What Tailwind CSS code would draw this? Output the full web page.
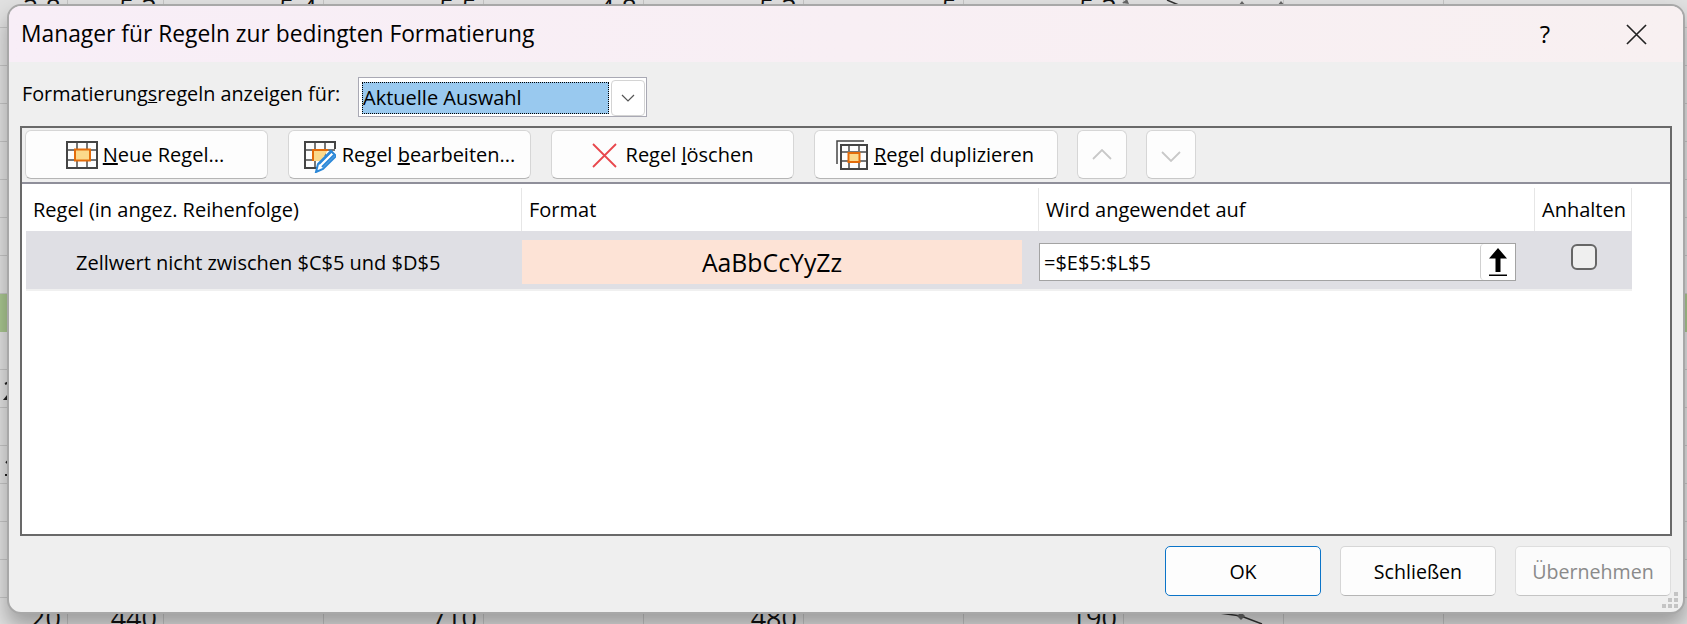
<!DOCTYPE html>
<html lang="de">
<head>
    <meta charset="UTF-8">
    <title>Manager für Regeln zur bedingten Formatierung</title>
    <script src="https://cdn.jsdelivr.net/npm/@tailwindcss/browser@4"></script>
</head>
<body class="m-0 overflow-hidden bg-[#e0e0e0] font-['Open_Sans',sans-serif] text-black">
<div class="relative w-[1687px] h-[624px] overflow-hidden">

    <!-- Tabelle im Hintergrund -->
    <div class="-mt-[10px] text-[27px] leading-none text-[#111]">
        <div class="flex h-[38px] border-b border-[#c4c4c4]">
            <div class="w-[68px] border-r border-[#c4c4c4] flex items-end justify-end pr-[6px] pb-[5px]">2.8</div>
            <div class="w-[96px] border-r border-[#c4c4c4] flex items-end justify-end pr-[6px] pb-[5px]">5.3</div>
            <div class="w-[160px] border-r border-[#c4c4c4] flex items-end justify-end pr-[6px] pb-[5px]">5.4</div>
            <div class="w-[160px] border-r border-[#c4c4c4] flex items-end justify-end pr-[6px] pb-[5px]">5.5</div>
            <div class="w-[160px] border-r border-[#c4c4c4] flex items-end justify-end pr-[6px] pb-[5px]">4.8</div>
            <div class="w-[160px] border-r border-[#c4c4c4] flex items-end justify-end pr-[6px] pb-[5px]">5.3</div>
            <div class="w-[160px] border-r border-[#c4c4c4] flex items-end justify-end pr-[6px] pb-[5px]">5</div>
            <div class="w-[160px] border-r border-[#c4c4c4] flex items-end justify-end pr-[6px] pb-[5px]">5.3</div>
            <div class="w-[160px] border-r border-[#c4c4c4]"></div>
            <div class="w-[160px] border-r border-[#c4c4c4]"></div>
        </div>
        <div class="h-[38px] border-b border-[#c4c4c4]"></div>
        <div class="h-[38px] border-b border-[#c4c4c4]"></div>
        <div class="h-[38px] border-b border-[#c4c4c4]"></div>
        <div class="h-[38px] border-b border-[#c4c4c4]"></div>
        <div class="h-[38px] border-b border-[#c4c4c4]"></div>
        <div class="h-[38px] border-b border-[#c4c4c4]"></div>
        <div class="h-[38px] border-b border-[#c4c4c4]"></div>
        <div class="h-[38px] bg-[#a8c58f]"></div>
        <div class="h-[38px] border-b border-[#c4c4c4]"></div>
        <div class="h-[38px] border-b border-[#c4c4c4]"></div>
        <div class="h-[38px] border-b border-[#c4c4c4]"></div>
        <div class="h-[38px] border-b border-[#c4c4c4]"></div>
        <div class="h-[38px] border-b border-[#c4c4c4]"></div>
        <div class="h-[38px] border-b border-[#c4c4c4]"></div>
        <div class="h-[38px] border-b border-[#c4c4c4]"></div>
        <div class="flex h-[38px]">
            <div class="w-[68px] border-r border-[#c4c4c4] flex items-end justify-end pr-[6px] pb-[5px]">20</div>
            <div class="w-[96px] border-r border-[#c4c4c4] flex items-end justify-end pr-[6px] pb-[5px]">440</div>
            <div class="w-[160px] border-r border-[#c4c4c4]"></div>
            <div class="w-[160px] border-r border-[#c4c4c4] flex items-end justify-end pr-[6px] pb-[5px]">710</div>
            <div class="w-[160px] border-r border-[#c4c4c4]"></div>
            <div class="w-[160px] border-r border-[#c4c4c4] flex items-end justify-end pr-[6px] pb-[5px]">480</div>
            <div class="w-[160px] border-r border-[#c4c4c4]"></div>
            <div class="w-[160px] border-r border-[#c4c4c4] flex items-end justify-end pr-[6px] pb-[5px]">190</div>
            <div class="w-[160px] border-r border-[#c4c4c4]"></div>
            <div class="w-[160px] border-r border-[#c4c4c4]"></div>
        </div>
    </div>

    <!-- Diagrammlinien hinter dem Dialog -->
    <svg class="absolute left-0 top-0" width="1687" height="624" fill="none">
        <path d="M1167 0L1181 6M1212 612L1241 616L1262 624" stroke="#333" stroke-width="1.5"/>
        <path d="M1122 3l5-4l2 5zM1238 6l4-5l4 5zM1277 6l4-5l4 5zM1237 616l4-4l4 4l-4 4z" fill="#666"/>
        <path d="M5 384l4-2M5 399l4-5l0 5zM6 463l3-3M5 475h3" stroke="#222" stroke-width="2"/>
    </svg>

    <!-- Dialog -->
    <div class="absolute left-[7px] top-[4px] w-[1678px] h-[610px] flex flex-col rounded-[14px] border-2 border-[#a8a8a8] bg-[#efefef] shadow-[0_12px_20px_rgba(0,0,0,0.3)] overflow-hidden">

        <!-- Titelleiste -->
        <div class="h-[56px] shrink-0 flex items-center bg-gradient-to-r from-[#f8eef7] to-[#f8f0f1] pl-[12px]">
            <h1 class="text-[22.800px] font-normal whitespace-nowrap">Manager für Regeln zur bedingten Formatierung</h1>
            <span class="ml-auto mr-[76px] text-[24px] leading-none">?</span>
            <svg class="mr-[36px]" width="21" height="21" viewBox="0 0 22 22" fill="none" stroke="#222" stroke-width="1.7"><path d="M1 1L21 21M21 1L1 21"/></svg>
        </div>

        <!-- Auswahlzeile -->
        <div class="flex items-start pl-[13px] pt-[15px] h-[64px] shrink-0">
            <label class="mt-[2px] w-[336px] text-[19.800px] whitespace-nowrap">Formatierung<u>s</u>regeln anzeigen für:</label>
            <div class="w-[289px] h-[40px] flex border border-[#a9a9b4] bg-white pl-[3px] py-[3px] pr-[1px] gap-[2px]">
                <div class="w-[247px] h-[32px] mt-[1px] bg-[#99c9ef] border border-dotted border-black text-[20px] leading-[29px]">Aktuelle Auswahl</div>
                <div class="w-[34px] h-[36px] -mt-[1px] rounded-[4px] border border-[#d4d4d4] flex items-center justify-center">
                    <svg width="14" height="8" viewBox="0 0 14 8" fill="none" stroke="#555" stroke-width="1.2"><path d="M1 1l6 6l6-6"/></svg>
                </div>
            </div>
        </div>

        <!-- Regelbereich -->
        <div class="ml-[11px] w-[1652px] h-[410px] shrink-0 border-2 border-[#696969] flex flex-col">
            <div class="h-[56px] shrink-0 flex gap-[20px] pl-[3px] pt-[2px] border-b-2 border-[#8f8f9a] text-[20px]">
                <button class="w-[243px] h-[49px] pt-[1px] flex items-center justify-center gap-[5px] pr-[3px] bg-[#fdfdfd] border border-[#d6d6d6] border-b-[#b5b5b5] rounded-[6px]">
                    <svg width="32" height="28" viewBox="0 0 32 28" fill="none">
                        <path d="M11 1v26M21 1v26M1 9h30M1 19h30" stroke="#777" stroke-width="2"/>
                        <rect x="9" y="8.500" width="15" height="11" fill="#fbd98b" stroke="#e36c0a" stroke-width="2"/>
                        <rect x="1" y="1" width="30" height="26" stroke="#444" stroke-width="2"/>
                    </svg>
                    <span><u>N</u>eue Regel...</span>
                </button>
                <button class="w-[243px] h-[49px] pt-[1px] flex items-center justify-center gap-[6px] bg-[#fdfdfd] border border-[#d6d6d6] border-b-[#b5b5b5] rounded-[6px]">
                    <svg width="32" height="32" viewBox="0 0 32 32" fill="none" class="mt-[3px]">
                        <path d="M11 1v26M21 1v14M1 9h30M1 19h12" stroke="#777" stroke-width="2"/>
                        <path d="M9 20V9h15l-7 11z" fill="#fbd98b"/>
                        <path d="M9 20V9h15" stroke="#e36c0a" stroke-width="2"/>
                        <path d="M31 8V1H1v26h13" stroke="#444" stroke-width="2"/>
                        <path d="M12 31l2-8L27 10l5 5L19 28z" fill="#fff" stroke="#2b88d8" stroke-width="2"/>
                        <path d="M15 23l13-13M18 26l12-12" stroke="#2b88d8" stroke-width="2"/>
                    </svg>
                    <span>Regel <u>b</u>earbeiten...</span>
                </button>
                <button class="w-[243px] h-[49px] pt-[1px] flex items-center justify-center gap-[9px] bg-[#fdfdfd] border border-[#d6d6d6] border-b-[#b5b5b5] rounded-[6px]">
                    <svg width="25" height="25" viewBox="0 0 25 25" fill="none" stroke="#e8474c" stroke-width="1.8"><path d="M1 1L24 24M24 1L1 24"/></svg>
                    <span>Regel <u>l</u>öschen</span>
                </button>
                <button class="w-[244px] h-[49px] pt-[1px] flex items-center justify-center gap-[6px] pr-[2px] bg-[#fdfdfd] border border-[#d6d6d6] border-b-[#b5b5b5] rounded-[6px]">
                    <svg width="32" height="30" viewBox="0 0 32 30" fill="none">
                        <path d="M1 24V1h27" stroke="#444" stroke-width="1.500"/>
                        <path d="M13 5v24M23 5v24M5 12h26M5 21h26" stroke="#777" stroke-width="2"/>
                        <rect x="12.500" y="13" width="11" height="9" fill="#fbd98b" stroke="#e36c0a" stroke-width="2"/>
                        <rect x="5" y="5" width="26" height="24" stroke="#444" stroke-width="2"/>
                    </svg>
                    <span><u>R</u>egel duplizieren</span>
                </button>
                <button class="w-[50px] h-[49px] -ml-[1px] flex items-center justify-center bg-[#fdfdfd] border border-[#d6d6d6] border-b-[#c8c8c8] rounded-[6px]">
                    <svg width="20" height="11" viewBox="0 0 20 11" fill="none" stroke="#c8c8c8" stroke-width="1.800"><path d="M1 10l9-9l9 9"/></svg>
                </button>
                <button class="w-[50px] h-[49px] -ml-[1px] flex items-center justify-center bg-[#fdfdfd] border border-[#d6d6d6] border-b-[#c8c8c8] rounded-[6px]">
                    <svg class="mt-[4px]" width="20" height="11" viewBox="0 0 20 11" fill="none" stroke="#c8c8c8" stroke-width="1.800"><path d="M1 1l9 9l9-9"/></svg>
                </button>
            </div>

            <div class="flex-1 bg-white pl-[4px] text-[20px]">
                <div class="grid grid-cols-[496px_517px_496px_97px] w-[1606px] h-[47px]">
                    <div class="flex items-center pl-[7px] mt-[4px] border-r border-[#e6e6e6]">Regel (in angez. Reihenfolge)</div>
                    <div class="flex items-center pl-[7px] mt-[4px] border-r border-[#e6e6e6]">Format</div>
                    <div class="flex items-center pl-[7px] mt-[4px] border-r border-[#e6e6e6]">Wird angewendet auf</div>
                    <div class="flex items-center pl-[7px] mt-[4px] border-r border-[#e6e6e6]">Anhalten</div>
                </div>
                <div class="grid grid-cols-[496px_517px_496px_97px] w-[1606px] h-[58px] bg-[#dfdfe4] shadow-[0_2px_0_#f0f0f0]">
                    <div class="pl-[50px] pt-[17px]">Zellwert nicht zwischen $C$5 und $D$5</div>
                    <div class="pt-[9px]">
                        <div class="w-[500px] h-[44px] pt-[1px] bg-[#fde3d6] flex items-center justify-center text-[24.800px]">AaBbCcYyZz</div>
                    </div>
                    <div class="pt-[12px]">
                        <div class="w-[477px] h-[38px] bg-white border border-[#a3a3a3] flex items-center justify-between pl-[4px]">
                            <span class="pt-[2px]">=$E$5:$L$5</span>
                            <span class="w-[35px] h-[36px] border-l border-[#d0d0d0] rounded-[4px] flex items-center justify-center">
                                <svg width="20" height="28" viewBox="0 0 20 28" fill="#000"><path d="M10 0L19 10.500H12.500V24H7.500V10.500H1z"/><path d="M1 27.300H19" stroke="#000" stroke-width="1.600"/></svg>
                            </span>
                        </div>
                    </div>
                    <div class="flex justify-center pt-[13px]">
                        <span class="w-[26px] h-[26px] rounded-[6px] border-2 border-[#666] bg-[#efefef]"></span>
                    </div>
                </div>
            </div>
        </div>

        <!-- Schaltflächen unten -->
        <div class="flex justify-end gap-[19px] pr-[12px] pt-[10px] text-[19.600px]">
            <button class="w-[156px] h-[50px] pt-[1px] bg-[#fdfdfd] border border-[#0b74c8] rounded-[5px]">OK</button>
            <button class="w-[156px] h-[50px] pt-[1px] bg-[#fdfdfd] border border-[#d6d6d6] border-b-[#b5b5b5] rounded-[5px]">Schließen</button>
            <button class="w-[156px] h-[50px] pt-[1px] bg-[#fbfbfb] border border-[#dedede] border-b-[#c4c4c4] rounded-[5px] text-[#8a8a8a]">Übernehmen</button>
        </div>

        <!-- Größengriff -->
        <svg class="absolute right-[3px] bottom-[2px]" width="18" height="18" viewBox="0 0 18 18" fill="#c4c4c4">
            <rect x="12" y="0" width="4" height="4"/><rect x="6" y="6" width="4" height="4"/><rect x="12" y="6" width="4" height="4"/><rect x="0" y="12" width="4" height="4"/><rect x="6" y="12" width="4" height="4"/><rect x="12" y="12" width="4" height="4"/>
        </svg>
    </div>
</div>
</body>
</html>
